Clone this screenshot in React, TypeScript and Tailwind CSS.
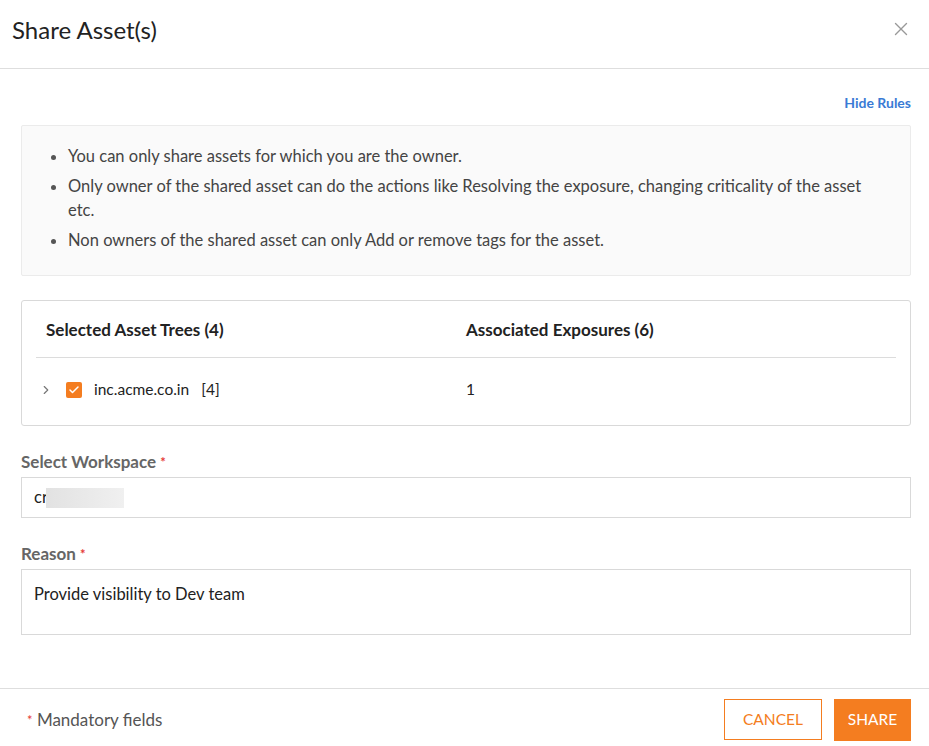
import React from 'react';
import { X, ChevronRight, Check } from 'lucide-react';

const rules = [
    'You can only share assets for which you are the owner.',
    'Only owner of the shared asset can do the actions like Resolving the exposure, changing criticality of the asset etc.',
    'Non owners of the shared asset can only Add or remove tags for the asset.',
];

export default function App() {
    return (
        <div className="w-[929px] h-[746px] bg-white flex flex-col text-[#222] font-['Lato','Noto_Sans',sans-serif]">
            {/* Header */}
            <div className="h-[69px] flex-none flex items-center justify-between pl-3 pr-[17px] border-b border-[#dedede]">
                <h1 className="text-[24px] leading-none text-[#222] -mt-[8px]">Share Asset(s)</h1>
                <button className="text-[#999] -mt-[10px]">
                    <X size={22} strokeWidth={1.5} />
                </button>
            </div>

            {/* Body */}
            <div className="flex-1 flex flex-col pl-[21px] pr-[18px] pt-[26px]">
                <div className="flex justify-end">
                    <button className="text-[14px] font-bold text-[#3a7bd5] leading-4">Hide Rules</button>
                </div>

                <div className="mt-[14px] h-[151px] bg-[#fafafa] border border-[#ebebeb] rounded-[2px] pl-[28px] pr-6 pt-[18px]">
                    <ul className="list-disc pl-[18px] text-[16.5px] leading-6 text-[#444] marker:text-[#555]">
                        {rules.map((r, i) => (
                            <li key={i} className="mb-[6px]">{r}</li>
                        ))}
                    </ul>
                </div>

                {/* Asset table */}
                <div className="mt-[24px] h-[126px] border border-[#d9d9d9] rounded-[3px] px-[14px]">
                    <div className="grid grid-cols-[420px_1fr] h-[57px] items-center border-b border-[#dcdcdc] pl-[10px] pt-[2px] text-[17px] font-bold text-[#222]">
                        <span>Selected Asset Trees (4)</span>
                        <span>Associated Exposures (6)</span>
                    </div>
                    <div className="grid grid-cols-[430px_1fr] h-[63px] items-center text-[15.5px] text-[#222]">
                        <div className="flex items-center">
                            <ChevronRight size={14} strokeWidth={2} className="text-[#777] ml-[3px]" />
                            <span className="ml-[13px] w-4 h-4 rounded-[2px] bg-[#f47d20] flex items-center justify-center">
                                <Check size={12} strokeWidth={3} className="text-white" />
                            </span>
                            <span className="ml-3">inc.acme.co.in</span>
                            <span className="ml-3">[4]</span>
                        </div>
                        <span>1</span>
                    </div>
                </div>

                {/* Workspace */}
                <label className="mt-[26px] text-[17px] font-bold text-[#666] leading-5">
                    Select Workspace <span className="text-[#e53935] text-[13px] align-top">*</span>
                </label>
                <div className="mt-[5px] h-[41px] border border-[#d9d9d9] flex items-center pl-3 text-[16.5px] text-[#222]">
                    <span>cr</span>
                    <span className="w-[78px] h-[20px] bg-gradient-to-r from-[#e2e2e2] to-[#f0f0f0] -ml-[2px]" />
                </div>

                {/* Reason */}
                <label className="mt-[26px] text-[17px] font-bold text-[#666] leading-5">
                    Reason <span className="text-[#e53935] text-[13px] align-top">*</span>
                </label>
                <div className="mt-[5px] h-[66px] border border-[#d9d9d9] px-3 pt-[14px] text-[16.5px] text-[#222] leading-5">
                    Provide visibility to Dev team
                </div>
            </div>

            {/* Footer */}
            <div className="h-[58px] flex-none border-t border-[#dedede] flex items-start justify-between pl-[27px] pr-[18px] pt-[10px]">
                <span className="text-[17px] text-[#555] mt-[11px] leading-5">
                    <span className="text-[#e53935] text-[13px] align-top">*</span> Mandatory fields
                </span>
                <div className="flex gap-3">
                    <button className="w-[98px] h-[41px] border border-[#f47d20] text-[#f47d20] text-[15.5px] bg-white">CANCEL</button>
                    <button className="w-[77px] h-[42px] bg-[#f47d20] text-white text-[15.5px]">SHARE</button>
                </div>
            </div>
        </div>
    );
}
